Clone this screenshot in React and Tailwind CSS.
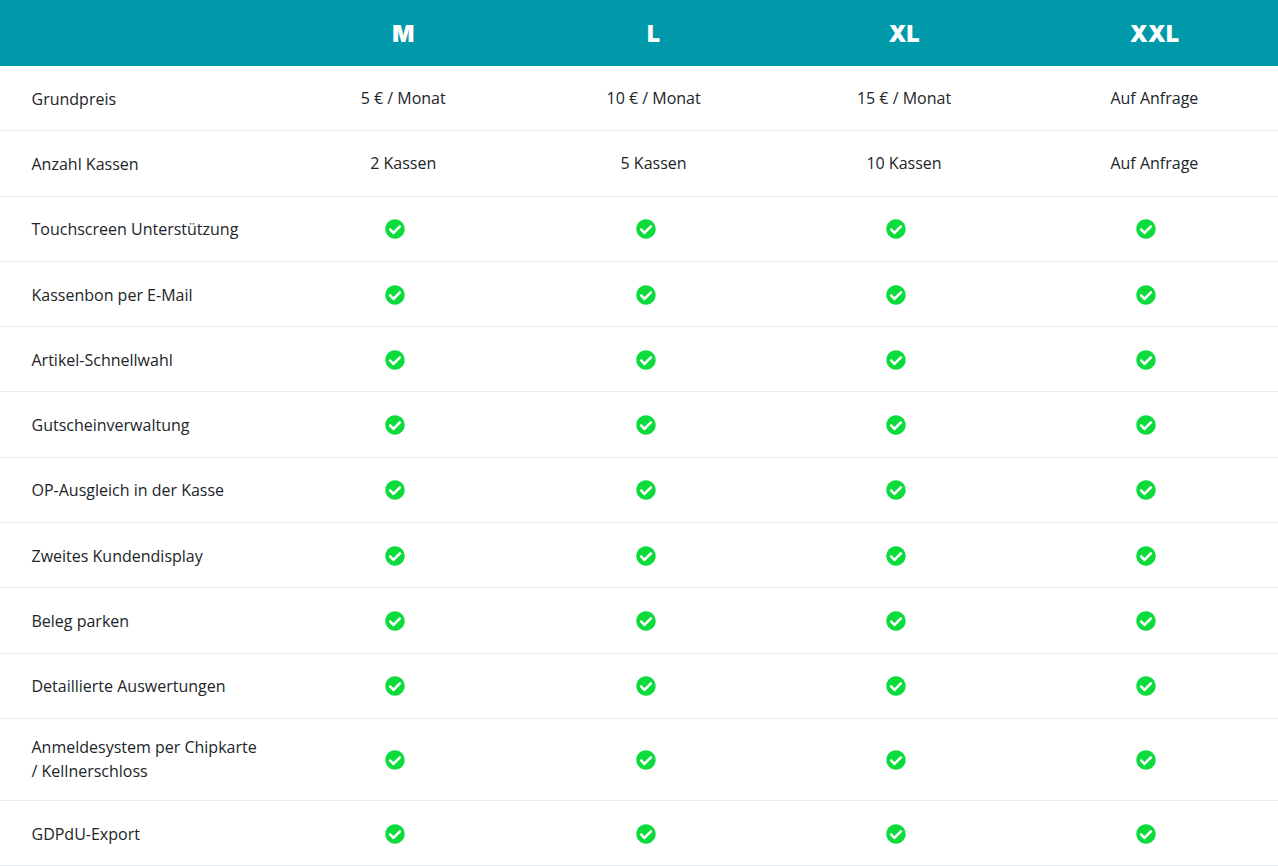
import { FaCheckCircle } from "react-icons/fa";

const plans = ["M", "L", "XL", "XXL"];

const rows = [
  { label: "Grundpreis", values: ["5 € / Monat", "10 € / Monat", "15 € / Monat", "Auf Anfrage"] },
  { label: "Anzahl Kassen", values: ["2 Kassen", "5 Kassen", "10 Kassen", "Auf Anfrage"] },
  { label: "Touchscreen Unterstützung" },
  { label: "Kassenbon per E-Mail" },
  { label: "Artikel-Schnellwahl" },
  { label: "Gutscheinverwaltung" },
  { label: "OP-Ausgleich in der Kasse" },
  { label: "Zweites Kundendisplay" },
  { label: "Beleg parken" },
  { label: "Detaillierte Auswertungen" },
  { label: "Anmeldesystem per Chipkarte / Kellnerschloss", tall: true },
  { label: "GDPdU-Export" },
];

function Row({ row }) {
  return (
    <div
      className={`grid grid-cols-[278px_repeat(4,250.4px)] items-center border-b border-[#e9ecef] ${
        row.tall ? "h-[82px]" : "h-[65.31px]"
      }`}
    >
      <div className={`w-[260px] pl-[31.5px] leading-6 ${row.tall ? "-mt-px" : "pt-px"}`}>{row.label}</div>
      {plans.map((plan, i) => (
        <div key={plan} className="flex justify-center">
          {row.values ? (
            <span className="-mt-px">{row.values[i]}</span>
          ) : (
            <FaCheckCircle className="mt-px mr-4 text-[#0bdc3b]" size={20} />
          )}
        </div>
      ))}
    </div>
  );
}

export default function App() {
  return (
    <div className="h-[866px] overflow-hidden bg-white font-['Open_Sans',sans-serif] text-base text-[#212529]">
      <div className="grid h-[66px] grid-cols-[278px_repeat(4,250.4px)] items-center bg-[#0099aa] text-white">
        <div />
        {plans.map((plan) => (
          <div key={plan} className="pt-0.5 text-center font-['Inter',sans-serif] text-[23px] font-black">
            {plan}
          </div>
        ))}
      </div>
      {rows.map((row) => (
        <Row key={row.label} row={row} />
      ))}
    </div>
  );
}
